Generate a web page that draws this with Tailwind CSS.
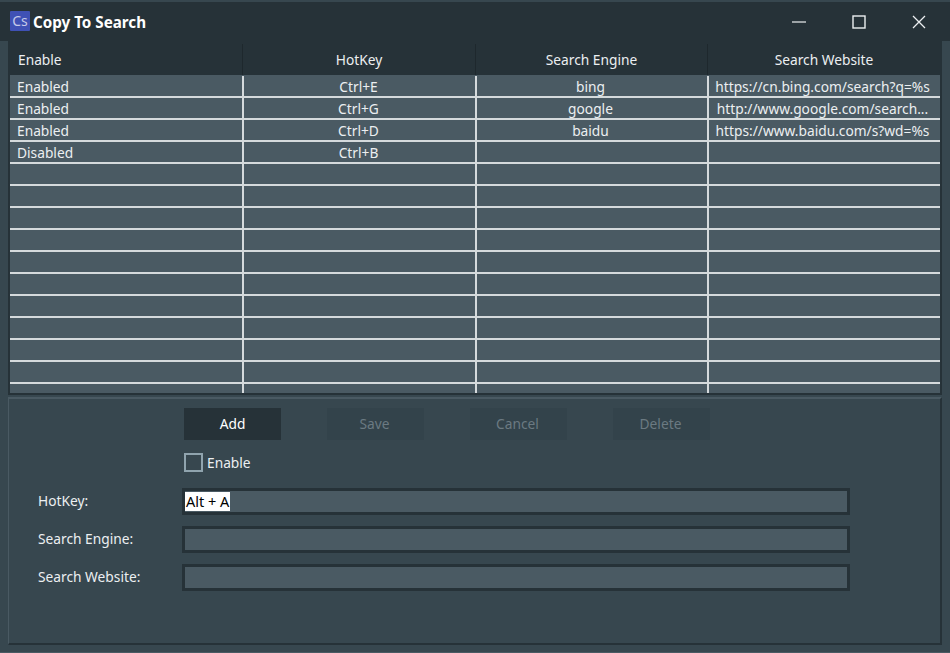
<!DOCTYPE html>
<html>

<head>
    <title>Copy To Search</title>
    <script src="https://cdn.jsdelivr.net/npm/@tailwindcss/browser@4"></script>
</head>

<body class="bg-[#37474f]">
    <div class="w-[950px] h-[653px] overflow-hidden flex flex-col bg-[#37474f] text-[#eceff1] text-[13.75px] font-['Noto_Sans',sans-serif] border-t-2 border-b border-t-[#37474f] border-b-[#4a5a63]">

        <!-- TITLE BAR -->
        <div class="h-[39px] shrink-0 bg-[#263238] flex items-center pl-[10px]">
            <div class="w-5 h-5 bg-[#3f51b5] text-[#c5cae9] text-[14px] leading-5 text-center rounded-[1px] -mt-[2px]">Cs</div>
            <div class="ml-[3px] mt-[1px] font-bold text-white text-[15.2px]">Copy To Search</div>
            <div class="ml-auto flex items-center">
                <button class="w-[60px] h-[30px] flex items-center justify-center">
                    <svg width="14" height="14" viewBox="0 0 14 14"><path d="M0 7H14" stroke="#eceff1" stroke-width="1.2" /></svg>
                </button>
                <button class="w-[60px] h-[30px] flex items-center justify-center">
                    <svg width="14" height="14" viewBox="0 0 14 14"><rect x="1" y="1" width="12" height="12" fill="none" stroke="#eceff1" stroke-width="1.4" /></svg>
                </button>
                <button class="w-[60px] h-[30px] flex items-center justify-center mr-[1px]">
                    <svg width="14" height="14" viewBox="0 0 14 14"><path d="M1 1L13 13M13 1L1 13" stroke="#eceff1" stroke-width="1.3" /></svg>
                </button>
            </div>
        </div>

        <!-- TABLE -->
        <div class="mx-2 h-[354px] shrink-0 bg-[#263238] pt-[3px] px-[2px] overflow-hidden">
            <div class="grid grid-cols-[233px_233px_232px_232px] h-[31px] items-center text-center">
                <div class="text-left pl-[8px] border-r border-[#1e282d] h-full leading-[31px]">Enable</div>
                <div class="border-r border-[#1e282d] h-full leading-[31px]">HotKey</div>
                <div class="border-r border-[#1e282d] h-full leading-[31px]">Search Engine</div>
                <div class="h-full leading-[31px]">Search Website</div>
            </div>
            <div class="w-[930px] h-[318px] pt-[1px] bg-[#4a5a63] grid grid-cols-[234px_233px_232px_231px] auto-rows-[22px] leading-[21px] overflow-hidden">
                <div class="pl-[7px] border-r-2 border-b-2 border-[#d5dadc]">Enabled</div>
                <div class="text-center pr-[2px] border-r-2 border-b-2 border-[#d5dadc]">Ctrl+E</div>
                <div class="text-center pr-[3px] border-r-2 border-b-2 border-[#d5dadc]">bing</div>
                <div class="text-center pr-[4px] whitespace-nowrap border-b-2 border-[#d5dadc]">https://cn.bing.com/search?q=%s</div>

                <div class="pl-[7px] border-r-2 border-b-2 border-[#d5dadc]">Enabled</div>
                <div class="text-center pr-[2px] border-r-2 border-b-2 border-[#d5dadc]">Ctrl+G</div>
                <div class="text-center pr-[3px] border-r-2 border-b-2 border-[#d5dadc]">google</div>
                <div class="text-center pr-[4px] whitespace-nowrap border-b-2 border-[#d5dadc]">http://www.google.com/search...</div>

                <div class="pl-[7px] border-r-2 border-b-2 border-[#d5dadc]">Enabled</div>
                <div class="text-center pr-[2px] border-r-2 border-b-2 border-[#d5dadc]">Ctrl+D</div>
                <div class="text-center pr-[3px] border-r-2 border-b-2 border-[#d5dadc]">baidu</div>
                <div class="text-center pr-[4px] whitespace-nowrap border-b-2 border-[#d5dadc]">https://www.baidu.com/s?wd=%s</div>

                <div class="pl-[7px] border-r-2 border-b-2 border-[#d5dadc]">Disabled</div>
                <div class="text-center pr-[2px] border-r-2 border-b-2 border-[#d5dadc]">Ctrl+B</div>
                <div class="border-r-2 border-b-2 border-[#d5dadc]"></div>
                <div class="border-b-2 border-[#d5dadc]"></div>

                <div class="border-r-2 border-b-2 border-[#d5dadc]"></div><div class="border-r-2 border-b-2 border-[#d5dadc]"></div><div class="border-r-2 border-b-2 border-[#d5dadc]"></div><div class="border-b-2 border-[#d5dadc]"></div>
                <div class="border-r-2 border-b-2 border-[#d5dadc]"></div><div class="border-r-2 border-b-2 border-[#d5dadc]"></div><div class="border-r-2 border-b-2 border-[#d5dadc]"></div><div class="border-b-2 border-[#d5dadc]"></div>
                <div class="border-r-2 border-b-2 border-[#d5dadc]"></div><div class="border-r-2 border-b-2 border-[#d5dadc]"></div><div class="border-r-2 border-b-2 border-[#d5dadc]"></div><div class="border-b-2 border-[#d5dadc]"></div>
                <div class="border-r-2 border-b-2 border-[#d5dadc]"></div><div class="border-r-2 border-b-2 border-[#d5dadc]"></div><div class="border-r-2 border-b-2 border-[#d5dadc]"></div><div class="border-b-2 border-[#d5dadc]"></div>
                <div class="border-r-2 border-b-2 border-[#d5dadc]"></div><div class="border-r-2 border-b-2 border-[#d5dadc]"></div><div class="border-r-2 border-b-2 border-[#d5dadc]"></div><div class="border-b-2 border-[#d5dadc]"></div>
                <div class="border-r-2 border-b-2 border-[#d5dadc]"></div><div class="border-r-2 border-b-2 border-[#d5dadc]"></div><div class="border-r-2 border-b-2 border-[#d5dadc]"></div><div class="border-b-2 border-[#d5dadc]"></div>
                <div class="border-r-2 border-b-2 border-[#d5dadc]"></div><div class="border-r-2 border-b-2 border-[#d5dadc]"></div><div class="border-r-2 border-b-2 border-[#d5dadc]"></div><div class="border-b-2 border-[#d5dadc]"></div>
                <div class="border-r-2 border-b-2 border-[#d5dadc]"></div><div class="border-r-2 border-b-2 border-[#d5dadc]"></div><div class="border-r-2 border-b-2 border-[#d5dadc]"></div><div class="border-b-2 border-[#d5dadc]"></div>
                <div class="border-r-2 border-b-2 border-[#d5dadc]"></div><div class="border-r-2 border-b-2 border-[#d5dadc]"></div><div class="border-r-2 border-b-2 border-[#d5dadc]"></div><div class="border-b-2 border-[#d5dadc]"></div>
                <div class="border-r-2 border-b-2 border-[#d5dadc]"></div><div class="border-r-2 border-b-2 border-[#d5dadc]"></div><div class="border-r-2 border-b-2 border-[#d5dadc]"></div><div class="border-b-2 border-[#d5dadc]"></div>
                <div class="border-r-2 border-[#d5dadc]"></div><div class="border-r-2 border-[#d5dadc]"></div><div class="border-r-2 border-[#d5dadc]"></div><div></div>
            </div>
        </div>

        <!-- FORM PANEL -->
        <div class="mx-2 mt-[2px] h-[248px] shrink-0 bg-[#37474f] border-t-2 border-l border-r-2 border-b-2 border-t-[#4a5a63] border-l-[#4a5a63] border-r-[#263238] border-b-[#263238]">
            <div class="flex gap-[46px] ml-[175px] mt-[9px]">
                <button class="w-[97px] h-[32px] bg-[#263238] text-white">Add</button>
                <button class="w-[97px] h-[32px] pr-[2px] bg-[#33434b] text-[#6b7a82]">Save</button>
                <button class="w-[97px] h-[32px] pr-[2px] bg-[#33434b] text-[#6b7a82]">Cancel</button>
                <button class="w-[97px] h-[32px] pr-[2px] bg-[#33434b] text-[#6b7a82]">Delete</button>
            </div>
            <label class="flex items-center ml-[175px] mt-[13px] h-[19px]">
                <span class="w-[19px] h-[19px] border-2 border-[#90a4ae] bg-[#37474f]"></span>
                <span class="ml-[4px] mt-[2px]">Enable</span>
            </label>
            <div class="grid grid-cols-[144px_668px] items-center gap-y-[11px] ml-[29px] mt-[16px]">
                <div class="-mt-[1px]">HotKey:</div>
                <div class="h-[27px] bg-[#4a5a63] border-[3px] border-[#263238] flex items-center leading-none"><span class="bg-white text-black px-[1px] h-[19px] leading-[19px] text-[14.5px]">Alt + A</span></div>
                <div class="-mt-[1px]">Search Engine:</div>
                <div class="h-[27px] bg-[#4a5a63] border-[3px] border-[#263238]"></div>
                <div>Search Website:</div>
                <div class="h-[27px] bg-[#4a5a63] border-[3px] border-[#263238]"></div>
            </div>
        </div>
    </div>
</body>

</html>
